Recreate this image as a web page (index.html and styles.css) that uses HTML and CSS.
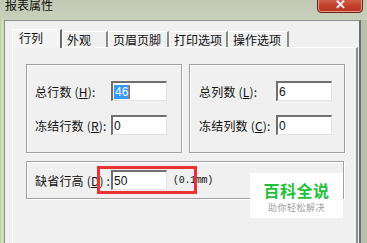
FILE: index.html
```html
<!DOCTYPE html>
<html lang="zh-CN">
<head>
    <meta charset="UTF-8" />
    <title>报表属性</title>
    <link rel="stylesheet" href="styles.css">
</head>
<body>
    <div class="titlebar">
        <span class="title">报表属性</span>
        <span class="close-btn">✕</span>
    </div>
    <div class="dialog">
        <div class="tabs">
            <div class="tab active">行列</div>
            <div class="tab w46">外观</div>
            <div class="tab w61">页眉页脚</div>
            <div class="tab w59">打印选项</div>
            <div class="tab w61">操作选项</div>
        </div>
        <div class="panel">
            <div class="group-row">
                <div class="group">
                    <div class="field">
                        <label>总行数 (<u>H</u>):</label>
                        <div class="input"><span class="selected">46</span><span class="caret"></span></div>
                    </div>
                    <div class="field">
                        <label>冻结行数 (<u>R</u>):</label>
                        <div class="input">0</div>
                    </div>
                </div>
                <div class="group">
                    <div class="field">
                        <label>总列数 (<u>L</u>):</label>
                        <div class="input">6</div>
                    </div>
                    <div class="field">
                        <label>冻结列数 (<u>C</u>):</label>
                        <div class="input">0</div>
                    </div>
                </div>
            </div>
            <div class="group wide">
                <div class="field">
                    <label>缺省行高 (<u>D</u>) :</label>
                    <div class="input">50</div>
                    <span class="unit">(0.1mm)</span>
                </div>
                <div class="highlight"></div>
            </div>
            <div class="watermark">
                <div class="wm-title">百科全说</div>
                <div class="wm-sub">助你轻松解决</div>
            </div>
        </div>
    </div>
</body>
</html>
```

FILE: styles.css
```css
/* Page / desktop behind the dialog */
body {
    margin: 0;
    width: 367px;
    height: 243px;
    overflow: hidden;
    font-family: "Noto Sans CJK SC", "Liberation Sans", sans-serif;
    font-size: 12px;
    color: #111;
    background: linear-gradient(90deg, #b7c79c 0px, #dbe6c4 2px, #c2cfaa 4px, #c4cab4 40%, #b9c0a9 100%);
}

/* Title bar */
.titlebar {
    height: 20px;
    display: flex;
    justify-content: space-between;
    align-items: flex-start;
    background: linear-gradient(180deg, #c2c9b3, #c9cfbb);
}

.title {
    margin: -2px 0 0 5px;
    line-height: 14px;
    font-size: 12px;
    color: #101010;
}

.close-btn {
    width: 44px;
    height: 16px;
    margin: -5px 4px 0 0;
    border: 1px solid #6b2218;
    border-radius: 0 0 4px 4px;
    background: linear-gradient(180deg, #d8705a, #c4422c 60%, #b5321e);
    color: #eef;
    font-size: 13px;
    font-weight: bold;
    line-height: 16px;
    text-align: center;
    box-shadow: inset 0 0 0 1px #e79b8a;
}

/* Dialog body */
.dialog {
    margin-left: 4px;
    width: 357px;
    height: 223px;
    box-sizing: border-box;
    background: #f0f0f0;
    border-top: 1px solid #8e8e8e;
    border-left: 1px solid #8e8e8e;
    border-right: 2px solid #6e6e6e;
    padding: 8px 0 0 7px;
}

/* Tabs */
.tabs {
    display: flex;
    align-items: flex-end;
    height: 18px;
}

.tab {
    height: 16px;
    padding: 0 0 0 4px;
    line-height: 15px;
    font-size: 12px;
    background: #f0f0f0;
    border-top: 1px solid #fff;
    border-left: 1px solid #fff;
    border-right: 2px solid #8a8a8a;
    box-sizing: border-box;
}

.tab.w46 { width: 46px; }
.tab.w59 { width: 59px; }
.tab.w61 { width: 61px; }

.tab.active {
    height: 19px;
    width: 50px;
    padding-left: 6px;
    border-right: 2px solid #6a6a6a;
    background: #f4f4f4;
    margin-bottom: -1px;
    position: relative;
    z-index: 1;
}

/* Tab page */
.panel {
    position: relative;
    width: 346px;
    height: 200px;
    box-sizing: border-box;
    border: 1px solid #a7a7a7;
    border-right: 2px solid #8c8c8c;
    border-left-color: #fff;
    border-top-color: #fff;
    padding: 16px 0 0 13px;
}

.group-row {
    display: flex;
    gap: 7px;
}

/* Group boxes */
.group {
    position: relative;
    width: 156px;
    height: 89px;
    box-sizing: border-box;
    border: 1px solid #a0a0a0;
    box-shadow: 1px 1px 0 #fff, inset 1px 1px 0 #fff;
    padding: 16px 0 0 8px;
    display: flex;
    flex-direction: column;
    gap: 14px;
}

.group-row .group:last-child {
    padding-left: 9px;
}

.group.wide {
    width: 318px;
    height: 38px;
    margin-top: 8px;
    padding-top: 8px;
}

.field {
    display: flex;
    align-items: center;
    height: 20px;
}

.field label {
    width: 76px;
    font-size: 12px;
    white-space: nowrap;
    letter-spacing: 0.2px;
}

.group-row .group:last-child .field label {
    width: 77px;
}

.input {
    width: 56px;
    height: 20px;
    box-sizing: border-box;
    background: #fff;
    border-top: 2px solid #6f6f6f;
    border-left: 2px solid #6f6f6f;
    border-right: 1px solid #e2e2e2;
    border-bottom: 1px solid #e2e2e2;
    font-family: "Liberation Sans", sans-serif;
    font-size: 12px;
    line-height: 16px;
    padding-left: 1px;
    display: flex;
    align-items: center;
}

.selected {
    background: #3399ff;
    color: #fff;
    padding: 0 1px;
    line-height: 14px;
}

.caret {
    width: 1px;
    height: 14px;
    background: #d06000;
}

.unit {
    margin-left: 6px;
    font-family: "Liberation Mono", monospace;
    font-size: 10px;
    letter-spacing: -0.3px;
}

/* Red annotation frame */
.highlight {
    position: absolute;
    left: 70px;
    top: 4px;
    width: 100px;
    height: 28px;
    box-sizing: border-box;
    border: 3px solid #ea3236;
}

/* Watermark badge */
.watermark {
    position: absolute;
    left: 237px;
    top: 125px;
    width: 93px;
    height: 45px;
    background: #fff;
    text-align: center;
    z-index: 2;
}

.wm-title {
    margin-top: 9px;
    font-size: 16px;
    font-weight: bold;
    line-height: 17px;
    color: #1fc13a;
    letter-spacing: 0.5px;
}

.wm-sub {
    font-size: 9px;
    line-height: 11px;
    color: #a0a0a0;
    margin-top: 3px;
    letter-spacing: 0.5px;
}
```
